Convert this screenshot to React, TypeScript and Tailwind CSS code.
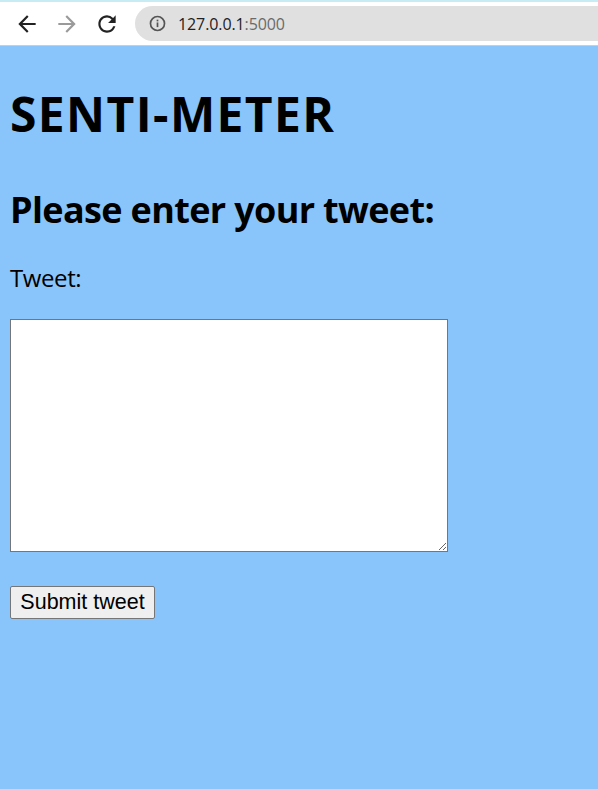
import React from "react";

export default function App() {
  return (
    <div className="w-[598px] h-[789px] bg-[#89c4fa] flex flex-col overflow-hidden">
      {/* browser chrome */}
      <div className="h-[2px] bg-[#c8ecf3]" />
      <div className="h-[44px] bg-white flex items-center border-b border-[#b3d3ee]">
        <div className="w-[54px] flex justify-center">
          <svg width="26" height="26" viewBox="0 0 24 24" fill="#222">
            <path d="M20 11H7.83l5.59-5.59L12 4l-8 8 8 8 1.41-1.41L7.83 13H20v-2z" />
          </svg>
        </div>
        <div className="w-[26px] flex justify-center">
          <svg width="26" height="26" viewBox="0 0 24 24" fill="#9a9a9a">
            <path d="M12 4l-1.41 1.41L16.17 11H4v2h12.17l-5.58 5.59L12 20l8-8z" />
          </svg>
        </div>
        <div className="w-[54px] flex justify-center">
          <svg width="26" height="26" viewBox="0 0 24 24" fill="#222">
            <path d="M17.65 6.35A7.958 7.958 0 0 0 12 4c-4.42 0-7.99 3.58-7.99 8s3.57 8 7.99 8c3.730 0 6.84-2.55 7.73-6h-2.08A5.99 5.99 0 0 1 12 18c-3.31 0-6-2.690-6-6s2.69-6 6-6c1.66 0 3.14.69 4.22 1.78L13 11h7V4l-2.35 2.35z" />
          </svg>
        </div>
        <div className="flex-1 h-[35px] ml-[1px] bg-[#e0e0e0] rounded-l-full flex items-center pl-[14px]">
          <svg width="17" height="17" viewBox="0 0 16 16">
            <circle cx="8" cy="8" r="6.6" fill="none" stroke="#555" strokeWidth="1.6" />
            <rect x="7.2" y="7" width="1.6" height="4.4" fill="#555" />
            <rect x="7.2" y="4.4" width="1.6" height="1.6" fill="#555" />
          </svg>
          <span className="ml-[12px] text-[16px] text-[#202124] font-['Open_Sans',sans-serif] tracking-[-0.1px]">
            127.0.0.1<span className="text-[#6a6a6a]">:5000</span>
          </span>
        </div>
      </div>

      {/* page */}
      <div className="px-[10px] font-['Open_Sans','Noto_Sans',sans-serif] text-black">
        <h1 className="text-[48px] font-bold leading-none mt-[44px] tracking-[1.4px]">SENTI-METER</h1>
        <h2 className="text-[36px] font-bold leading-none mt-[54px] tracking-[-0.65px]">Please enter your tweet:</h2>
        <div className="text-[24px] leading-none mt-[38px] tracking-[-0.4px]">Tweet:</div>
        <div className="mt-[29px]">
          <textarea className="block w-[438px] h-[233px] bg-white border border-[#767676] resize" />
        </div>
        <div className="mt-[34px]">
          <button className="h-[33px] w-[145px] bg-[#efefef] border border-[#767676] rounded-[2px] text-[21.5px] leading-none font-['Liberation_Sans',Arial,sans-serif] text-black">
            Submit tweet
          </button>
        </div>
      </div>
    </div>
  );
}
